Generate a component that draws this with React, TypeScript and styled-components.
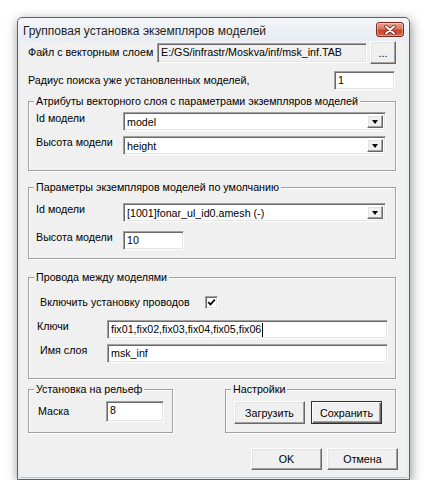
import React from 'react';
import styled, { createGlobalStyle, css } from 'styled-components';

const GlobalStyle = createGlobalStyle`
  html, body { margin: 0; padding: 0; background: #fff; }
  body {
    font-family: "Liberation Sans", Arial, sans-serif;
    font-size: 10.7px;
    color: #000;
  }
`;

const sunken = css`
  box-sizing: border-box;
  border: 1px solid;
  border-color: #a0a0a0 #fff #fff #a0a0a0;
  box-shadow: inset 1px 1px 0 #696969, inset -1px -1px 0 #e3e3e3;
`;

const raised = css`
  box-sizing: border-box;
  border: 1px solid;
  border-color: #fff #696969 #696969 #fff;
  box-shadow: inset -1px -1px 0 #a0a0a0, inset 1px 1px 0 #e3e3e3;
  background: #f0f0f0;
`;

const Page = styled.div`
  padding: 17px 0 0 17px;
`;

const Window = styled.div`
  width: 393px;
  height: 463px;
  box-sizing: border-box;
  border: 1px solid #59626e;
  border-radius: 5px 5px 0 0;
  background: linear-gradient(#f3f6f9, #e7ecf2 24px, #e7ecf2);
  box-shadow: 1px 3px 12px rgba(0, 0, 0, 0.45);
  display: flex;
  flex-direction: column;
`;

const TitleBar = styled.div`
  height: 23px;
  display: flex;
  align-items: center;
  justify-content: space-between;
  padding: 0 5px;
`;

const Title = styled.span`
  font-size: 12px;
  line-height: 15px;
  padding-top: 4px;
  color: #1e1e1e;
`;

const CloseButton = styled.div`
  width: 28px;
  height: 15px;
  box-sizing: border-box;
  border: 1px solid #7c2b20;
  border-radius: 3px;
  background: linear-gradient(#e9a591, #d9765f 45%, #c4452c 55%, #d0674c);
  box-shadow: inset 0 0 0 1px rgba(255, 255, 255, 0.35);
  display: flex;
  align-items: center;
  justify-content: center;
`;

const Client = styled.div`
  flex: 1;
  margin: 0 2px 2px;
  background: #f0f0f0;
  box-shadow: 0 1px 0 #9ccbee;
  padding: 0 11px 0 8px;
  display: flex;
  flex-direction: column;
`;

const Row = styled.div<{ $mt?: number; $align?: string; $justify?: string }>`
  display: flex;
  align-items: ${(p) => p.$align || 'flex-start'};
  justify-content: ${(p) => p.$justify || 'flex-start'};
  margin-top: ${(p) => p.$mt || 0}px;
`;

const Label = styled.span<{ $w?: number; $ml?: number }>`
  flex-shrink: 0;
  width: ${(p) => (p.$w ? `${p.$w}px` : 'auto')};
  margin-left: ${(p) => p.$ml || 0}px;
  line-height: 13px;
  white-space: nowrap;
`;

const TextBox = styled.div<{ $w: number; $h?: number; $ro?: boolean; $top?: boolean; $mr?: number }>`
  ${sunken};
  width: ${(p) => p.$w}px;
  height: ${(p) => p.$h || 19}px;
  margin-right: ${(p) => p.$mr || 0}px;
  background: ${(p) => (p.$ro ? '#f0f0f0' : '#fff')};
  padding: ${(p) => (p.$top ? '2px 3px 0' : '0 3px')};
  display: flex;
  align-items: ${(p) => (p.$top ? 'flex-start' : 'center')};
  line-height: 13px;
  white-space: nowrap;
  overflow: hidden;
`;

const Caret = styled.span`
  display: inline-block;
  width: 1px;
  height: 14px;
  background: #000;
  margin-left: 1px;
`;

const Combo = styled.div<{ $w: number }>`
  ${sunken};
  width: ${(p) => p.$w}px;
  height: 19px;
  background: #fff;
  padding: 2px;
  display: flex;
  align-items: stretch;
`;

const ComboValue = styled.span`
  flex: 1;
  padding-left: 1px;
  line-height: 15px;
  white-space: nowrap;
  overflow: hidden;
`;

const DropButton = styled.span`
  ${raised};
  width: 16px;
  display: flex;
  align-items: center;
  justify-content: center;
`;

const Arrow = styled.span`
  width: 0;
  height: 0;
  border-left: 3.5px solid transparent;
  border-right: 3.5px solid transparent;
  border-top: 4px solid #000;
  margin-top: 1px;
`;

const Button = styled.button<{ $w: number; $h: number; $default?: boolean }>`
  ${raised};
  width: ${(p) => p.$w}px;
  height: ${(p) => p.$h}px;
  padding: 0;
  font-family: inherit;
  font-size: 10.7px;
  color: #000;
  ${(p) =>
    p.$default &&
    css`
      border: 1px solid #303030;
      box-shadow: inset 1px 1px 0 #fff, inset -1px -1px 0 #696969, inset -2px -2px 0 #a0a0a0;
    `}
`;

const GroupBox = styled.fieldset<{ $w?: number; $mt?: number }>`
  margin: ${(p) => p.$mt || 0}px 0 0;
  padding: 0;
  min-width: 0;
  width: ${(p) => (p.$w ? `${p.$w}px` : 'auto')};
  box-sizing: border-box;
  border: 1px solid #a0a0a0;
  box-shadow: 1px 1px 0 #fff, inset 1px 1px 0 #fff;
`;

const Legend = styled.legend`
  margin-left: 5px;
  padding: 0 2px;
  line-height: 13px;
  font-size: 10.7px;
  background: #f0f0f0;
`;

const GroupBody = styled.div<{ $pad: string }>`
  padding: ${(p) => p.$pad};
`;

const CheckBox = styled.span`
  ${sunken};
  width: 13px;
  height: 13px;
  background: #fff;
  display: flex;
  align-items: center;
  justify-content: center;
`;

const Footer = styled.div`
  display: flex;
  justify-content: flex-end;
  gap: 5px;
  margin: 15px -2px 0 0;
`;

const ButtonPair = styled.div`
  display: flex;
  gap: 6px;
`;

const ComboRow = ({ label, value, mt }: { label: string; value: string; mt?: number }) => (
  <Row $mt={mt}>
    <Label $w={87}>{label}</Label>
    <Combo $w={263}>
      <ComboValue>{value}</ComboValue>
      <DropButton>
        <Arrow />
      </DropButton>
    </Combo>
  </Row>
);

export default function App() {
  return (
    <Page>
      <GlobalStyle />
      <Window>
        <TitleBar>
          <Title>Групповая установка экземпляров моделей</Title>
          <CloseButton>
            <svg width="12" height="10" viewBox="0 0 12 10">
              <path d="M2 1.5 L10 8.5 M10 1.5 L2 8.5" stroke="#5a1a12" strokeWidth="3.4" strokeLinecap="round" />
              <path d="M2 1.5 L10 8.5 M10 1.5 L2 8.5" stroke="#fff" strokeWidth="2" strokeLinecap="round" />
            </svg>
          </CloseButton>
        </TitleBar>
        <Client>
          <Row $align="center" style={{ height: 23 }}>
            <Label $w={129}>Файл с векторным слоем</Label>
            <TextBox $w={211} $h={20} $ro $mr={3}>
              E:/GS/infrastr/Moskva/inf/msk_inf.TAB
            </TextBox>
            <Button $w={26} $h={23}>...</Button>
          </Row>

          <Row $mt={7} $align="center" $justify="space-between">
            <Label>Радиус поиска уже установленных моделей,</Label>
            <TextBox $w={61} $mr={1}>1</TextBox>
          </Row>

          <GroupBox $mt={5}>
            <Legend>Атрибуты векторного слоя с параметрами экземпляров моделей</Legend>
            <GroupBody $pad="4px 9px 15px 7px">
              <ComboRow label="Id модели" value="model" />
              <ComboRow label="Высота модели" value="height" mt={5} />
            </GroupBody>
          </GroupBox>

          <GroupBox $mt={10}>
            <Legend>Параметры экземпляров моделей по умолчанию</Legend>
            <GroupBody $pad="9px 9px 8px 7px">
              <ComboRow label="Id модели" value="[1001]fonar_ul_id0.amesh (-)" />
              <Row $mt={9}>
                <Label $w={87}>Высота модели</Label>
                <TextBox $w={61}>10</TextBox>
              </Row>
            </GroupBody>
          </GroupBox>

          <GroupBox $mt={12}>
            <Legend>Провода между моделями</Legend>
            <GroupBody $pad="12px 7px 15px 7px">
              <Row $align="center">
                <Label $w={165} $ml={4}>Включить установку проводов</Label>
                <CheckBox>
                  <svg width="9" height="9" viewBox="0 0 9 9">
                    <path d="M1.2 4.2 L3.5 6.6 L7.8 1.6" fill="none" stroke="#000" strokeWidth="1.7" />
                  </svg>
                </CheckBox>
              </Row>
              <Row $mt={11}>
                <Label $w={70} $ml={1}>Ключи</Label>
                <TextBox $w={281}>
                  fix01,fix02,fix03,fix04,fix05,fix06
                  <Caret />
                </TextBox>
              </Row>
              <Row $mt={5}>
                <Label $w={67} $ml={4}>Имя слоя</Label>
                <TextBox $w={281}>msk_inf</TextBox>
              </Row>
            </GroupBody>
          </GroupBox>

          <Row $mt={4} $justify="space-between">
            <GroupBox $w={145}>
              <Legend>Установка на рельеф</Legend>
              <GroupBody $pad="5px 0 10px 9px">
                <Row $align="center">
                  <Label $w={68}>Маска</Label>
                  <TextBox $w={58} $h={21} $top>8</TextBox>
                </Row>
              </GroupBody>
            </GroupBox>
            <GroupBox $w={171}>
              <Legend>Настройки</Legend>
              <GroupBody $pad="5px 0 8px 8px">
                <ButtonPair>
                  <Button $w={71} $h={23}>Загрузить</Button>
                  <Button $w={71} $h={23} $default>Сохранить</Button>
                </ButtonPair>
              </GroupBody>
            </GroupBox>
          </Row>

          <Footer>
            <Button $w={71} $h={22}>OK</Button>
            <Button $w={71} $h={22}>Отмена</Button>
          </Footer>
        </Client>
      </Window>
    </Page>
  );
}
